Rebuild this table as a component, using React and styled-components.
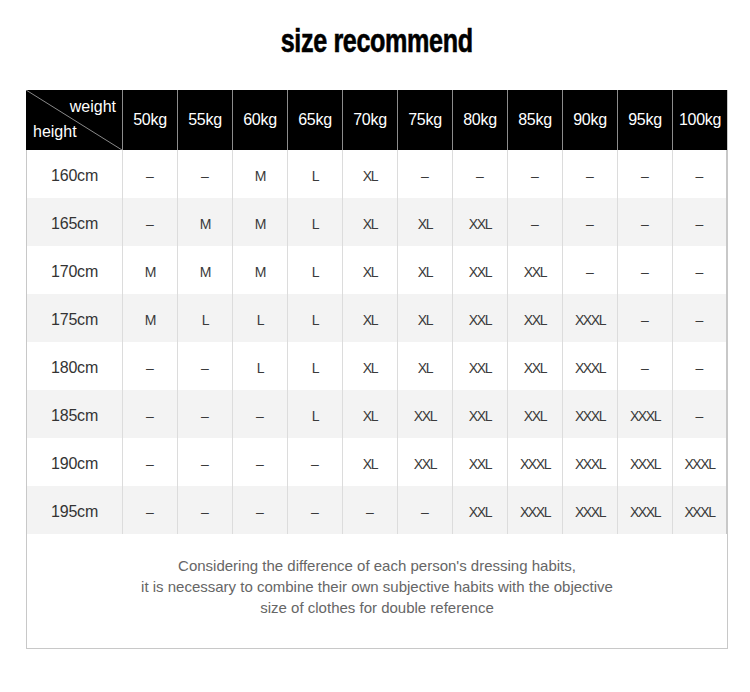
import styled, { createGlobalStyle } from 'styled-components';

const GlobalStyle = createGlobalStyle`
  body {
    margin: 0;
    background: #fff;
    font-family: "Liberation Sans", Arial, sans-serif;
  }
`

const weights = ['50kg', '55kg', '60kg', '65kg', '70kg', '75kg', '80kg', '85kg', '90kg', '95kg', '100kg'];

const rows = [
  ['160cm', ['–', '–', 'M', 'L', 'XL', '–', '–', '–', '–', '–', '–']],
  ['165cm', ['–', 'M', 'M', 'L', 'XL', 'XL', 'XXL', '–', '–', '–', '–']],
  ['170cm', ['M', 'M', 'M', 'L', 'XL', 'XL', 'XXL', 'XXL', '–', '–', '–']],
  ['175cm', ['M', 'L', 'L', 'L', 'XL', 'XL', 'XXL', 'XXL', 'XXXL', '–', '–']],
  ['180cm', ['–', '–', 'L', 'L', 'XL', 'XL', 'XXL', 'XXL', 'XXXL', '–', '–']],
  ['185cm', ['–', '–', '–', 'L', 'XL', 'XXL', 'XXL', 'XXL', 'XXXL', 'XXXL', '–']],
  ['190cm', ['–', '–', '–', '–', 'XL', 'XXL', 'XXL', 'XXXL', 'XXXL', 'XXXL', 'XXXL']],
  ['195cm', ['–', '–', '–', '–', '–', '–', 'XXL', 'XXXL', 'XXXL', 'XXXL', 'XXXL']],
];

const App = () => {
  return (
    <Page>
      <GlobalStyle />
      <TitleRow>
        <Title>size recommend</Title>
      </TitleRow>
      <Box>
        <Grid>
          <Corner>
            <Diagonal viewBox="0 0 97 60" preserveAspectRatio="none">
              <line x1="0" y1="0" x2="97" y2="60" stroke="#8a8a8a" strokeWidth="1" />
            </Diagonal>
            <CornerTop>weight</CornerTop>
            <CornerBottom>height</CornerBottom>
          </Corner>
          {weights.map(w => (
            <HeadCell key={w}>{w}</HeadCell>
          ))}
          {rows.map(([h, sizes], i) => (
            <Row key={h} $alt={i % 2 === 1}>
              <HeightCell>{h}</HeightCell>
              {sizes.map((s, j) => (
                <SizeCell key={j} $dash={s === '–'}>{s}</SizeCell>
              ))}
            </Row>
          ))}
        </Grid>
        <Note>
          Considering the difference of each person's dressing habits,<br />
          it is necessary to combine their own subjective habits with the objective<br />
          size of clothes for double reference
        </Note>
      </Box>
    </Page>
  );
}

export default App;

const Page = styled.div`
  width: 750px;
  height: 692px;
  padding-top: 21px;
  box-sizing: border-box;
`
const TitleRow = styled.div`
  display: flex;
  justify-content: center;
  height: 38px;
  margin-bottom: 31px;
  padding-left: 4px;
`
const Title = styled.h1`
  margin: 0;
  font-family: "Liberation Sans", Arial, sans-serif;
  font-weight: 900;
  font-size: 34px;
  line-height: 38px;
  color: #000;
  letter-spacing: -0.5px;
  transform: scaleX(0.74);
  -webkit-text-stroke: 0.6px #000;
  white-space: nowrap;
`
const Box = styled.div`
  margin-left: 26px;
  width: 702px;
  border: 1px solid #c8c8c8;
  border-top: none;
  box-sizing: border-box;
`
const Grid = styled.div`
  display: grid;
  grid-template-columns: 96px repeat(11, 55px);
  margin-left: -1px;
  margin-right: -1px;
`
const Corner = styled.div`
  position: relative;
  height: 60px;
  background: #000;
  color: #fff;
  font-size: 16px;
`
const Diagonal = styled.svg`
  position: absolute;
  inset: 0;
  width: 100%;
  height: 100%;
`
const CornerTop = styled.span`
  position: absolute;
  right: 6px;
  top: 8px;
`
const CornerBottom = styled.span`
  position: absolute;
  left: 7px;
  bottom: 9px;
`
const HeadCell = styled.div`
  height: 60px;
  display: flex;
  align-items: center;
  justify-content: center;
  background: #000;
  color: #fff;
  font-size: 16px;
  letter-spacing: -0.3px;
  border-left: 1px solid #8c8c8c;
`
const Row = styled.div`
  display: contents;
  & > div {
    background: ${p => (p.$alt ? '#f3f3f3' : '#fff')};
  }
`
const HeightCell = styled.div`
  height: 48px;
  padding-top: 3px;
  box-sizing: border-box;
  display: flex;
  align-items: center;
  justify-content: center;
  font-size: 16px;
  color: #333;
  letter-spacing: -0.2px;
  border-left: 1px solid #c8c8c8;
`
const SizeCell = styled.div`
  height: 48px;
  padding-top: 3px;
  box-sizing: border-box;
  display: flex;
  align-items: center;
  justify-content: center;
  font-size: 14px;
  color: #3a3a3a;
  letter-spacing: ${p => (p.$dash ? '0' : '-1.4px')};
  border-left: 1px solid #dcdcdc;
  &:last-child {
    border-right: 1px solid #c8c8c8;
  }
`
const Note = styled.p`
  margin: 0;
  padding: 21px 0 30px;
  text-align: center;
  font-size: 15px;
  line-height: 21px;
  color: #666;
`
